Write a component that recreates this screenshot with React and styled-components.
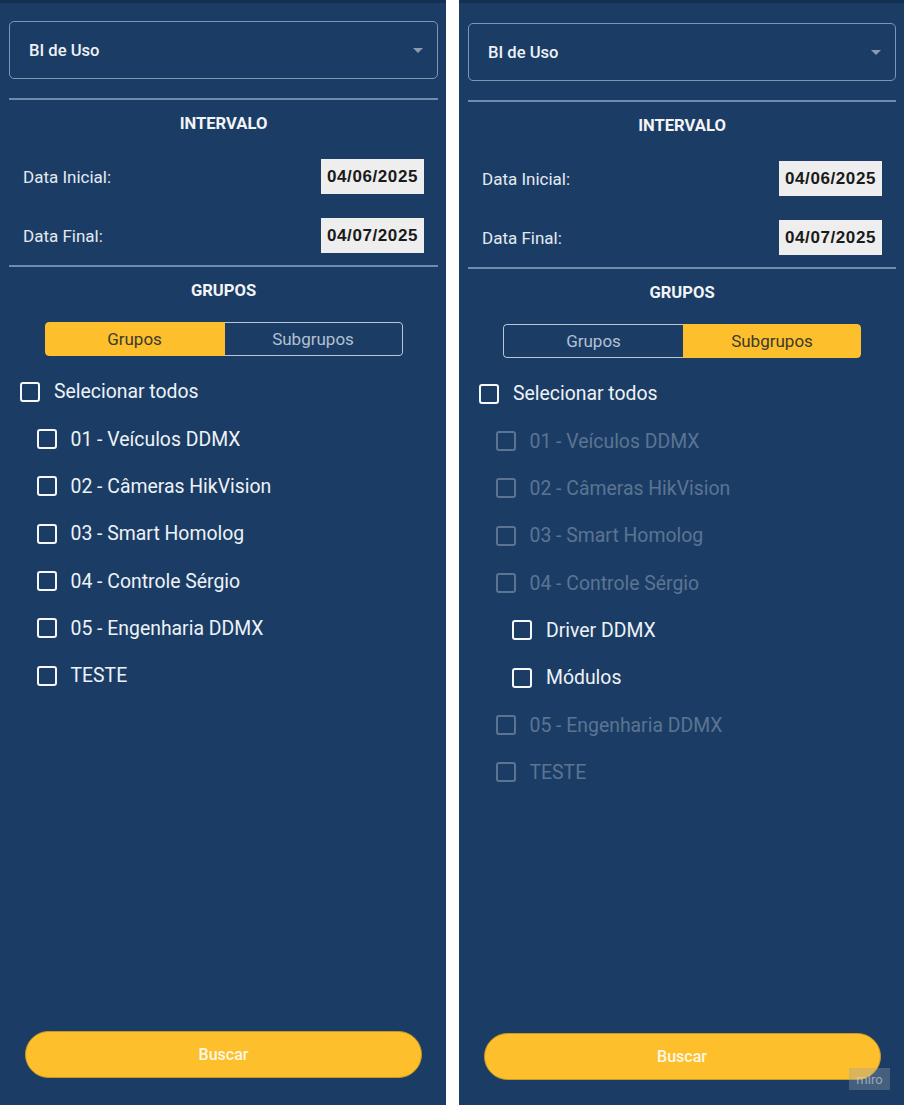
import styled, {createGlobalStyle} from "styled-components";

const GlobalStyle = createGlobalStyle`
	html, body {
		margin: 0;
		padding: 0;
		background: #fff;
	}
	body {
		font-family: Roboto, "Noto Sans", sans-serif;
	}
`;

const Screen = styled.div`
	display: flex;
	gap: 13px;
	width: 904px;
	height: 1105px;
	overflow: hidden;
	position: relative;
`;

const Panel = styled.div`
	width: ${props => props.$width}px;
	height: 1105px;
	box-sizing: border-box;
	background-color: #1b3d65;
	border-top: 3px solid #132f52;
	padding: ${props => 18 + props.$shift}px 8px 0 9px;
	display: flex;
	flex-direction: column;
	color: #fff;
`;

const Select = styled.div`
	height: 58px;
	box-sizing: border-box;
	border: 1.5px solid #7d96b4;
	border-radius: 5px;
	display: flex;
	align-items: center;
	justify-content: space-between;
	padding: 0 14px 0 19px;
	font-size: 16.6px;
	font-weight: 500;
	color: #eef2f7;
`;

const Arrow = styled.span`
	width: 0;
	height: 0;
	border-left: 5px solid transparent;
	border-right: 5px solid transparent;
	border-top: 5px solid #8f99aa;
`;

const Divider = styled.div`
	height: 2px;
	background-color: #6f8cad;
	margin: ${props => props.$top}px 0 0;
`;

const SectionTitle = styled.div`
	text-align: center;
	font-size: 16.6px;
	font-weight: 700;
	line-height: 20px;
	margin-top: 14px;
	color: #f2f4f7;
`;

const DateRow = styled.div`
	display: flex;
	align-items: center;
	justify-content: space-between;
	padding: 0 14px 0 14px;
	height: 35px;
	margin-top: ${props => props.$top}px;
`;

const DateLabel = styled.span`
	font-size: 17px;
	color: #e4e9f0;
`;

const DateBox = styled.span`
	background-color: #eeeeee;
	color: #1a1a1a;
	font-family: "Liberation Sans", Arial, sans-serif;
	font-weight: 700;
	font-size: 17px;
	letter-spacing: 0.6px;
	width: 103px;
	height: 35px;
	display: flex;
	align-items: center;
	justify-content: center;
`;

const Toggle = styled.div`
	display: grid;
	grid-template-columns: 180px 178px;
	width: 358px;
	height: 34px;
	margin: 21px auto 0;
	border-radius: 4px;
	overflow: hidden;
	box-sizing: border-box;
`;

const ToggleOption = styled.div`
	display: flex;
	align-items: center;
	justify-content: center;
	font-size: 17px;
	background-color: ${props => props.$active ? "#fdbf2c" : "transparent"};
	color: ${props => props.$active ? "#3b3a2c" : "#b3c0d2"};
	border: ${props => props.$active ? "none" : "1.5px solid #b9c6d6"};
	border-radius: ${props => props.$side === "left" ? "4px 0 0 4px" : "0 4px 4px 0"};
	border-left: ${props => !props.$active && props.$side === "right" ? "none" : ""};
	border-right: ${props => !props.$active && props.$side === "left" ? "none" : ""};
`;

const List = styled.div`
	flex: 1;
	display: flex;
	flex-direction: column;
	margin-top: 12px;
`;

const CheckRow = styled.label`
	display: flex;
	align-items: center;
	gap: 14px;
	height: 47.35px;
	padding-left: ${props => 11 + props.$level * 16.5}px;
	font-size: 19.4px;
	color: ${props => props.$disabled ? "#5b7492" : "#eef2f7"};
`;

const Box = styled.span`
	width: 20px;
	height: 20px;
	box-sizing: border-box;
	border: 2.5px solid ${props => props.$disabled ? "#5b7492" : "#f5f7fa"};
	border-radius: 3px;
	flex-shrink: 0;
`;

const SearchButton = styled.button`
	display: block;
	width: 397px;
	height: 47px;
	margin: 0 auto ${props => 27 - props.$shift}px;
	border: 1px solid #c79a22;
	border-radius: 24px;
	background-color: #fdbf2c;
	color: #fff8e6;
	font-family: Roboto, sans-serif;
	font-size: 16px;
	font-weight: 500;
`;

const Watermark = styled.div`
	position: absolute;
	right: 14px;
	bottom: 15px;
	width: 41px;
	height: 22px;
	background-color: rgba(150, 160, 175, 0.35);
	color: rgba(225, 230, 238, 0.55);
	font-size: 13px;
	display: flex;
	align-items: center;
	justify-content: center;
`;

const groups = [
	{name: "01 - Veículos DDMX"},
	{name: "02 - Câmeras HikVision"},
	{name: "03 - Smart Homolog"},
	{name: "04 - Controle Sérgio", subs: ["Driver DDMX", "Módulos"]},
	{name: "05 - Engenharia DDMX"},
	{name: "TESTE"},
];

function Check({label, level, disabled}){
	return(
		<CheckRow $level = {level} $disabled = {disabled}>
			<Box $disabled = {disabled}/>
			{label}
		</CheckRow>
	);
};

function FilterPanel({mode, width, shift}){
	const sub = mode === "subgrupos";
	return(
		<Panel $width = {width} $shift = {shift}>
			<Select>
				BI de Uso
				<Arrow/>
			</Select>
			<Divider $top = {19}/>
			<SectionTitle>INTERVALO</SectionTitle>
			<DateRow $top = {25}>
				<DateLabel>Data Inicial:</DateLabel>
				<DateBox>04/06/2025</DateBox>
			</DateRow>
			<DateRow $top = {24}>
				<DateLabel>Data Final:</DateLabel>
				<DateBox>04/07/2025</DateBox>
			</DateRow>
			<Divider $top = {12}/>
			<SectionTitle>GRUPOS</SectionTitle>
			<Toggle>
				<ToggleOption $side = "left" $active = {!sub}>Grupos</ToggleOption>
				<ToggleOption $side = "right" $active = {sub}>Subgrupos</ToggleOption>
			</Toggle>
			<List>
				<Check label = "Selecionar todos" level = {0}/>
				{groups.map(g => (
					<div key = {g.name}>
						<Check label = {g.name} level = {1} disabled = {sub}/>
						{sub && g.subs && g.subs.map(s => (
							<Check key = {s} label = {s} level = {2}/>
						))}
					</div>
				))}
			</List>
			<SearchButton $shift = {shift}>Buscar</SearchButton>
		</Panel>
	);
};

export default function App(){
	return(
		<>
			<GlobalStyle/>
			<Screen>
				<FilterPanel mode = "grupos" width = {446} shift = {0}/>
				<FilterPanel mode = "subgrupos" width = {445} shift = {2}/>
				<Watermark>miro</Watermark>
			</Screen>
		</>
	);
};
